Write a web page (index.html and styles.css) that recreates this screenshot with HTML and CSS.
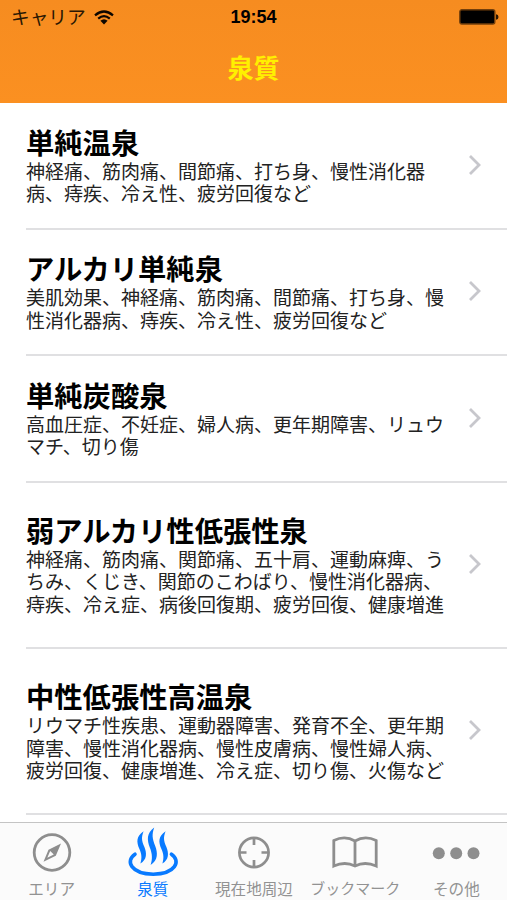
FILE: index.html
```html
<!DOCTYPE html>
<html lang="ja">
<head>
<meta charset="utf-8">
<title>泉質</title>
<link rel="stylesheet" href="styles.css">
</head>
<body>
<div class="app">
  <header class="header">
    <div class="status">
      <div class="carrier"><span>キャリア</span>
        <svg class="wifi" width="20" height="15" viewBox="0 0 20 15"><g fill="none" stroke="#0d0700" stroke-width="2.2"><path d="M1 5.4Q10-2.4 19 5.4"/><path d="M4.2 8.6Q10 3.6 15.8 8.6"/></g><path d="M6.4 10.8Q10 7.8 13.6 10.8L10 14.4Z" fill="#0d0700"/></svg>
      </div>
      <time class="clock">19:54</time>
      <svg class="battery" width="40" height="16" viewBox="0 0 40 16"><rect x=".8" y=".8" width="35" height="14.2" rx="2" fill="#000" stroke="#733f0b" stroke-width="1.4"/><path d="M37 5.2Q39.5 5.5 39.5 8T37 10.8Z" fill="#2b1703"/></svg>
    </div>
    <h1 class="heading">泉質</h1>
  </header>
  <main class="list">
    <article class="row">
      <div class="text"><h2>単純温泉</h2><p>神経痛、筋肉痛、間節痛、打ち身、慢性消化器<br>病、痔疾、冷え性、疲労回復など</p></div>
      <svg class="chevron" viewBox="0 0 14 22"><path d="M2 2L11 11L2 20"/></svg>
    </article>
    <article class="row">
      <div class="text"><h2>アルカリ単純泉</h2><p>美肌効果、神経痛、筋肉痛、間節痛、打ち身、慢<br>性消化器病、痔疾、冷え性、疲労回復など</p></div>
      <svg class="chevron" viewBox="0 0 14 22"><path d="M2 2L11 11L2 20"/></svg>
    </article>
    <article class="row">
      <div class="text"><h2>単純炭酸泉</h2><p>高血圧症、不妊症、婦人病、更年期障害、リュウ<br>マチ、切り傷</p></div>
      <svg class="chevron" viewBox="0 0 14 22"><path d="M2 2L11 11L2 20"/></svg>
    </article>
    <article class="row tall">
      <div class="text"><h2>弱アルカリ性低張性泉</h2><p>神経痛、筋肉痛、関節痛、五十肩、運動麻痺、う<br>ちみ、くじき、関節のこわばり、慢性消化器病、<br>痔疾、冷え症、病後回復期、疲労回復、健康増進</p></div>
      <svg class="chevron" viewBox="0 0 14 22"><path d="M2 2L11 11L2 20"/></svg>
    </article>
    <article class="row tall">
      <div class="text"><h2>中性低張性高温泉</h2><p>リウマチ性疾患、運動器障害、発育不全、更年期<br>障害、慢性消化器病、慢性皮膚病、慢性婦人病、<br>疲労回復、健康増進、冷え症、切り傷、火傷など</p></div>
      <svg class="chevron" viewBox="0 0 14 22"><path d="M2 2L11 11L2 20"/></svg>
    </article>
  </main>
  <nav class="tabs">
    <a class="tab">
      <svg width="52" height="56" viewBox="0 0 52 56"><circle cx="26" cy="29.5" r="17.8" fill="none" stroke="#8e8e8e" stroke-width="2.8"/><path fill="#8e8e8e" fill-rule="evenodd" d="M35 20.5L29.8 32.7L17.5 38.8L22.5 26.7ZM24.2 28L21.3 34.8L27.8 31.6Z"/></svg>
      <span>エリア</span>
    </a>
    <a class="tab active">
      <svg width="52" height="56" viewBox="0 0 52 56"><g fill="#087aff"><path d="M16.6 8.2C9 13.5 9.5 19 12.2 25.5C14.8 31 15 35 13.4 40.6C20.2 36.5 19.8 30 17.4 24C14.6 17.5 14.2 14.5 16.6 8.2Z"/><path d="M27.2 4.6C19.4 10.5 20 17 22.8 24.5C25.4 31 25.6 36 23.6 42C31.2 37 30.8 30 28.2 23C25.2 15.5 24.8 11.5 27.2 4.6Z"/><path d="M38.6 8.2C31 13.5 31.5 19 34.2 25.5C36.8 31 37 35 35.4 40.6C42.2 36.5 41.8 30 39.4 24C36.6 17.5 36.2 14.5 38.6 8.2Z"/></g><path d="M8 31.2C-2 38 4 51 26.2 51.2C48.4 51 54.4 38 44.4 31.2" fill="none" stroke="#087aff" stroke-width="3.6" stroke-linecap="round"/></svg>
      <span>泉質</span>
    </a>
    <a class="tab">
      <svg width="52" height="56" viewBox="0 0 52 56"><g fill="none" stroke="#8e8e8e" stroke-width="2.7"><circle cx="26" cy="29.5" r="14.6"/><path d="M26 15V22M26 37V44M11.5 29.5H18.5M33.5 29.5H40.5"/></g></svg>
      <span>現在地周辺</span>
    </a>
    <a class="tab">
      <svg width="52" height="56" viewBox="0 0 52 56"><path d="M26 18Q16 12 4.8 17.5V43Q16 38 26 43Q36 38 47.2 43V17.5Q36 12 26 18ZV43" fill="none" stroke="#8e8e8e" stroke-width="2.8"/></svg>
      <span class="condensed">ブックマーク</span>
    </a>
    <a class="tab">
      <svg width="52" height="56" viewBox="0 0 52 56"><g fill="#8e8e8e"><circle cx="8.8" cy="30.3" r="6"/><circle cx="26.2" cy="30.3" r="6"/><circle cx="43.5" cy="30.3" r="6"/></g></svg>
      <span>その他</span>
    </a>
  </nav>
</div>
</body>
</html>
```
FILE: styles.css
```css
* { box-sizing: border-box; }
body {
  margin: 0;
  background: #fff;
  color: #000;
  font-family: "Liberation Sans", "Noto Sans CJK JP", sans-serif;
}
.app {
  width: 507px;
  height: 900px;
  display: flex;
  flex-direction: column;
  overflow: hidden;
}
.header {
  height: 102.5px;
  flex: none;
  background: linear-gradient(#f68c20, #fb9021);
}
.status {
  height: 34px;
  padding: 0 8px 0 11px;
  display: grid;
  grid-template-columns: 1fr auto 1fr;
  align-items: center;
}
.carrier {
  display: flex;
  align-items: center;
  gap: 8px;
  font: 18.7px/32px "Noto Sans CJK JP", sans-serif;
  color: #2a1703;
}
.carrier span { margin-top: -2px; }
.clock {
  margin-right: 3px;
  font-size: 18px;
  font-weight: 700;
}
.battery { justify-self: end; }
.heading {
  margin: 0;
  font: 700 26px/65px "Noto Sans CJK JP", sans-serif;
  text-align: center;
  color: #fff000;
}
.list {
  flex: 1;
  min-height: 0;
  padding-left: 26px;
  overflow: hidden;
}
.row {
  height: 126.5px;
  padding: 0 25px 1px 0;
  display: flex;
  align-items: center;
  justify-content: space-between;
  border-bottom: 2px solid #e0e0e2;
}
.row:first-child { height: 127px; }
.row.tall { height: 166.2px; }
.text {
  font-family: "Noto Sans CJK JP", sans-serif;
  white-space: nowrap;
}
h2 {
  margin: 0 0 2px;
  font-size: 28.3px;
  line-height: 33px;
  font-weight: 700;
}
p {
  margin: 0;
  font-size: 19px;
  line-height: 22.5px;
  color: #222;
}
.chevron {
  width: 14px;
  height: 22px;
  fill: none;
  stroke: #c7c7cc;
  stroke-width: 2.8;
}
.tabs {
  height: 78.5px;
  flex: none;
  padding-left: 1px;
  display: grid;
  grid-template-columns: repeat(5, 101.2px);
  border-top: 1.5px solid #c4c4c4;
  background: #fbfbfb;
}
.tab {
  display: flex;
  flex-direction: column;
  align-items: center;
  color: #929292;
  font: 15.6px/18px "Noto Sans CJK JP", sans-serif;
  white-space: nowrap;
}
.tab svg { display: block; }
.condensed { font-size: 15px; }
.active { color: #087aff; }
```
